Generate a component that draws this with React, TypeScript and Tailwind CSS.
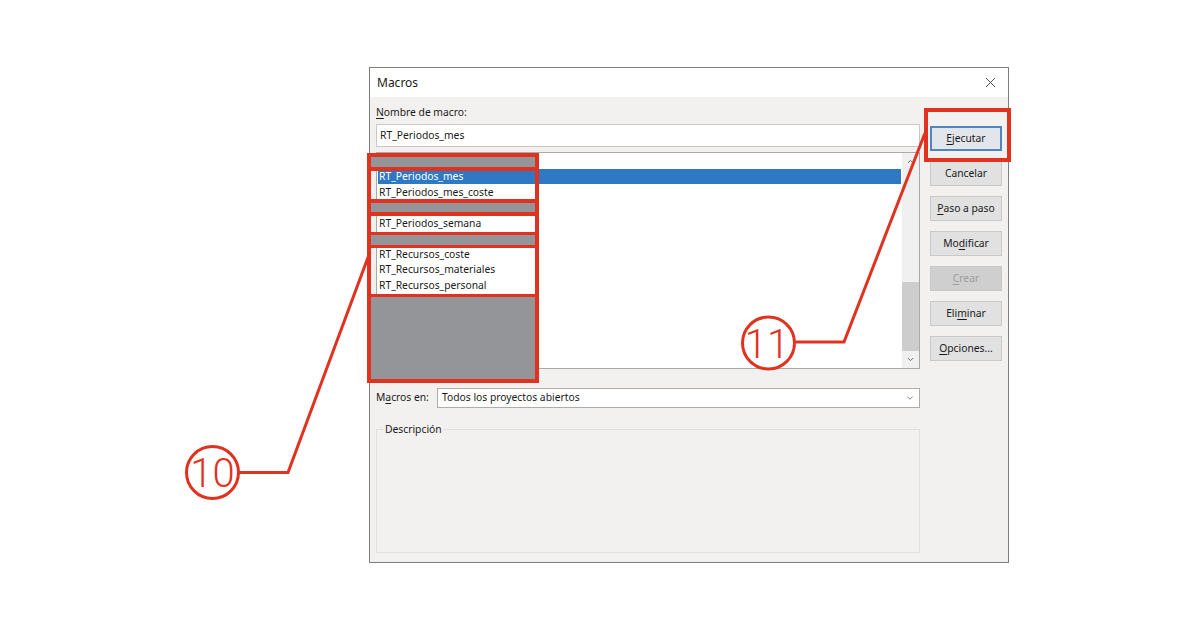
import { X, ChevronDown, ChevronUp } from "lucide-react";

const FONT = { fontFamily: '"Noto Sans", "Open Sans", sans-serif' };

const rows: { name: string; hidden?: boolean; selected?: boolean }[] = [
  { name: "", hidden: true },
  { name: "RT_Periodos_mes", selected: true },
  { name: "RT_Periodos_mes_coste" },
  { name: "", hidden: true },
  { name: "RT_Periodos_semana" },
  { name: "", hidden: true },
  { name: "RT_Recursos_coste" },
  { name: "RT_Recursos_materiales" },
  { name: "RT_Recursos_personal" },
];

const Btn = ({
  children,
  variant = "normal",
}: {
  children: React.ReactNode;
  variant?: "normal" | "default" | "disabled";
}) => {
  const styles = {
    normal: "bg-[#e1e1e1] border border-[#c9c9c9] text-[#1a1a1a]",
    default: "bg-[#e2e5ea] border-2 border-[#4f86c2] text-[#1a1a1a]",
    disabled: "bg-[#cfcfcf] border border-[#c8c8c8] text-[#9d9d9d]",
  };
  return (
    <div
      className={`h-[25px] w-[72px] flex items-center justify-center text-[10.3px] ${styles[variant]}`}
    >
      {children}
    </div>
  );
};

const U = ({ children }: { children: React.ReactNode }) => (
  <span className="underline underline-offset-[2px]">{children}</span>
);

export default function App() {
  return (
    <div
      className="relative w-[1200px] h-[630px] bg-white overflow-hidden text-[#1a1a1a]"
      style={FONT}
    >
      {/* dialog */}
      <div className="ml-[369px] mt-[67px] w-[640px] h-[496px] border border-[#7d7d7d] flex flex-col">
        <div className="h-[29px] bg-white flex items-center justify-between pl-[7px] pr-[9px]">
          <span className="text-[12px]">Macros</span>
          <X className="w-[17px] h-[17px] text-[#333]" strokeWidth={1.2} />
        </div>

        <div className="flex-1 bg-[#f3f0f0] flex pl-[6px]">
          {/* left column */}
          <div className="w-[544px] pt-[7px] flex flex-col">
            <div className="h-[16px] leading-[16px] text-[10.3px]">
              <U>N</U>ombre de macro:
            </div>
            <div className="mt-[4px] h-[23px] bg-white border border-[#c8c8c8] flex items-center pl-[3px] text-[10.3px]">
              RT_Periodos_mes
            </div>

            {/* list box */}
            <div className="mt-[5px] h-[217px] bg-white border border-[#a9a9a9] flex">
              <div className="flex-1 pl-[1px] pr-[1px]">
                {rows.map((r, i) => (
                  <div
                    key={i}
                    className={`h-[15.5px] flex items-center pl-[1px] text-[10.3px] leading-none ${
                      r.selected ? "bg-[#2f78c4] text-white" : ""
                    }`}
                  >
                    {r.name}
                  </div>
                ))}
              </div>
              <div className="w-[17px] bg-[#f0f0f0] flex flex-col">
                <div className="h-[17px] flex items-center justify-center">
                  <ChevronUp className="w-[9px] h-[9px] text-[#606060]" strokeWidth={2.5} />
                </div>
                <div className="flex-1 flex flex-col justify-end">
                  <div className="h-[69px] bg-[#cdcdcd]" />
                </div>
                <div className="h-[17px] flex items-center justify-center">
                  <ChevronDown className="w-[9px] h-[9px] text-[#606060]" strokeWidth={2.5} />
                </div>
              </div>
            </div>

            {/* macros en */}
            <div className="mt-[19px] h-[20px] flex items-center">
              <div className="w-[61px] text-[10.3px]">
                M<U>a</U>cros en:
              </div>
              <div className="flex-1 h-[20px] bg-white border border-[#adadad] flex items-center justify-between pl-[4px] pr-[4px] text-[10.3px]">
                <span>Todos los proyectos abiertos</span>
                <ChevronDown className="w-[10px] h-[10px] text-[#707070]" strokeWidth={2} />
              </div>
            </div>

            {/* descripcion */}
            <fieldset className="mt-[13px] h-[132px] border border-[#e3dfdf] px-[7px]">
              <legend className="px-[1px] text-[10.3px] leading-[16px]">Descripción</legend>
            </fieldset>
          </div>

          {/* buttons */}
          <div className="ml-[10px] pt-[29px] flex flex-col gap-[10px]">
            <Btn variant="default">
              <U>E</U>jecutar
            </Btn>
            <Btn>Cancelar</Btn>
            <Btn>
              <U>P</U>aso a paso
            </Btn>
            <Btn>
              Mo<U>d</U>ificar
            </Btn>
            <Btn variant="disabled">
              <U>C</U>rear
            </Btn>
            <Btn>
              Eli<U>m</U>inar
            </Btn>
            <Btn>
              <U>O</U>pciones...
            </Btn>
          </div>
        </div>
      </div>

      {/* annotation: gray mask with red frames over the list */}
      <div className="absolute left-[367px] top-[153px] w-[172px] h-[230px] border-[4px] border-[#e0321f] flex flex-col">
        <div className="h-[10px] bg-[#939598]" />
        <div className="h-[4px] bg-[#e0321f]" />
        <div className="h-[28px]" />
        <div className="h-[4px] bg-[#e0321f]" />
        <div className="h-[9px] bg-[#939598]" />
        <div className="h-[4px] bg-[#e0321f]" />
        <div className="h-[16px]" />
        <div className="h-[3px] bg-[#e0321f]" />
        <div className="h-[10px] bg-[#939598]" />
        <div className="h-[3px] bg-[#e0321f]" />
        <div className="h-[46px]" />
        <div className="h-[3px] bg-[#e0321f]" />
        <div className="flex-1 bg-[#939598]" />
      </div>

      {/* annotation: frame around Ejecutar */}
      <div className="absolute left-[924px] top-[108px] w-[87px] h-[54px] border-[4px] border-[#e0321f]" />

      {/* annotation: callouts */}
      <svg
        className="absolute left-0 top-0 pointer-events-none"
        width={1200}
        height={630}
        viewBox="0 0 1200 630"
      >
        <g stroke="#e0321f" strokeWidth={3} fill="none">
          <circle cx={212.5} cy={472.5} r={26} />
          <polyline points="239,472.5 288,472.5 370,252" />
          <circle cx={768.5} cy={343} r={26} />
          <polyline points="795,342 844,342 925,133" />
        </g>
        <g fill="#e0321f" style={{ fontFamily: "Roboto, sans-serif", fontWeight: 300 }} fontSize={40} textAnchor="middle">
          <text x={212.5} y={487}>10</text>
          <text x={767} y={357.5}>11</text>
        </g>
      </svg>
    </div>
  );
}
